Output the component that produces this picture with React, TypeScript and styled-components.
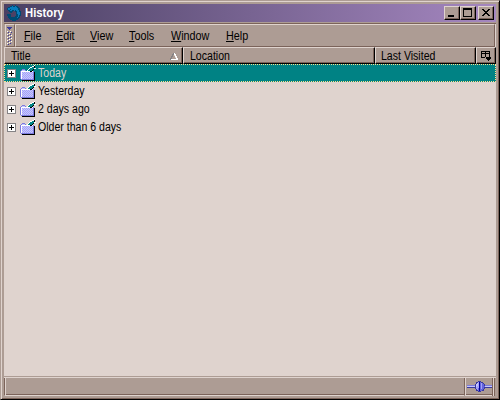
import React from 'react';
import styled, { createGlobalStyle } from 'styled-components';

const base = '#ad9c94';
const light = '#dfd3ce';
const dark = '#7b635a';

const Global = createGlobalStyle`
  *{box-sizing:border-box}
  html,body{margin:0;padding:0;overflow:hidden}
  body{font:12px/14px "Liberation Sans",Arial,sans-serif;color:#000;cursor:default}
`;

const Frame = styled.div`
  width:500px;height:400px;background:${base};
  border-style:solid;border-width:1px;border-color:${base} #000 #000 ${base};
  box-shadow:inset 1px 1px ${light},inset -1px -1px ${dark};
  padding:3px;display:flex;flex-direction:column;
`;
const TitleBar = styled.header`
  height:18px;flex:none;display:flex;align-items:center;padding:0 2px;
  background:linear-gradient(90deg,#4a4063,#a587c0);
`;
const WindowTitle = styled.h1`
  margin:0 auto 0 3px;color:#fff;font-size:12px;line-height:18px;font-weight:700;
  transform:scaleX(.94);transform-origin:0 0;
`;
const WinButton = styled.button<{ $gap?: boolean }>`
  width:16px;height:14px;padding:0;margin-left:${p => (p.$gap ? 2 : 0)}px;
  background:${base};border:1px solid;border-color:${light} #000 #000 ${light};
  box-shadow:inset -1px -1px ${dark};display:flex;
`;
const MenuBar = styled.nav`
  height:24px;flex:none;margin-top:1px;display:flex;padding-left:1px;
  border-top:1px solid ${dark};
`;
const Grip = styled.div`
  width:10px;border:1px solid;border-color:${light} ${dark} ${dark} ${light};padding:2px 0 0 1px;
`;
const MenuItems = styled.div`
  flex:1;display:flex;border:1px solid;border-color:${light} ${dark} ${dark} ${light};
  margin-right:1px;box-shadow:1px 0 ${light};
`;
const MenuItem = styled.div<{ $w: number }>`
  width:${p => p.$w}px;flex:none;line-height:22px;white-space:nowrap;
  &:first-child{margin-left:8px}
`;
const Label = styled.span<{ $scale?: number }>`
  display:inline-block;white-space:nowrap;transform:scaleX(${p => p.$scale ?? 0.88});transform-origin:0 50%;
  u{text-underline-offset:1px;text-decoration-thickness:1px;text-decoration-skip-ink:none}
`;
const Columns = styled.div`
  display:flex;height:17px;flex:none;
`;
const Column = styled.div<{ $w: number; $pad?: number }>`
  width:${p => p.$w}px;flex:none;display:flex;align-items:center;justify-content:space-between;
  padding:1px 4px 0 ${p => p.$pad ?? 6}px;border:1px solid;border-color:${light} #000 #000 ${light};
  box-shadow:inset -1px -1px ${dark};
`;
const Tree = styled.main`
  height:312px;flex:none;background:${light};
`;
const Row = styled.div<{ $selected?: boolean }>`
  height:18px;display:flex;align-items:center;padding-left:2px;
  color:${p => (p.$selected ? light : '#000')};
  border:1px ${p => (p.$selected ? 'dotted #ffe08c' : 'solid transparent')};
  background:${p => (p.$selected ? '#008284' : 'transparent')};
`;
const Expander = styled.span`
  width:9px;height:9px;flex:none;margin:1px 4px 0 0;display:flex;
`;
const EntryLabel = styled(Label)`
  margin-left:2px;
`;
const StatusBar = styled.footer`
  height:19px;flex:none;display:flex;margin-top:1px;padding-right:1px;border-top:1px solid ${light};
`;
const StatusPane = styled.div<{ $w: number }>`
  width:${p => p.$w}px;border-left:1px solid ${dark};border-bottom:1px solid ${light};
  box-shadow:inset 1px 0 ${light},inset 0 -1px ${dark};display:flex;padding:3px 0 0 2px;
`;
const StatusEdge = styled.div`
  width:3px;border:solid;border-width:0 1px;border-color:${dark};background:${light};
`;
const Svg = styled.svg`display:block;flex:none;`;

const palette: Record<string, string> = {
  k: '#000', w: '#fff', l: light, d: dark, g: '#848284',
  b: '#087dbd', n: '#004a73', t: '#008284', s: '#005a5a',
  v: '#a5a2f7', p: '#c6c7ff', m: '#39399c', y: '#6363de', o: '#0000a0', e: '#7b7bde',
};

function Pixels({ rows }: { rows: string[] }) {
  const w = Math.max(...rows.map(r => r.length));
  return (
    <Svg width={w} height={rows.length} shapeRendering="crispEdges" aria-hidden="true">
      {rows.flatMap((r, y) => [...r].map((c, x) =>
        palette[c] ? <rect key={`${x}-${y}`} x={x} y={y} width={1} height={1} fill={palette[c]} /> : null))}
    </Svg>
  );
}

const lizard = [
  '......n..n......',
  '....nnbnnbnn....',
  '..nnbbbbbbbnn...',
  '.nbbbbbbbbbbnn..',
  '.nbbnbbbbbbbnn..',
  '..nnbbnnbnbbbn..',
  '...nnnn..nnbbnn.',
  '....nn....nbbbn.',
  '..........nbbbn.',
  '.nnnn.....nnbbn.',
  '.nnnn.....nnbnn.',
  '..nnn....nnnbn..',
  '..nnnnnnnnnbnn..',
  '...nnnnnnnnnn...',
  '....nnnnnnnn....',
  '......nnnn......',
];
const folder = [
  '..............w.',
  '............wwk.',
  '..........wwttk.',
  '.........wttttww',
  '..eee...wttttk..',
  '.epppe.wttttk...',
  'ewwwwwwwwwkkwe..',
  'ewvpvpvpvpvpvek.',
  'ewpvpvpvpvpvpek.',
  'ewvpvpvpvpvpvek.',
  'ewpvpvpvpvpvpek.',
  'ewvpvpvpvpvpvek.',
  'ewpvpvpvpvpvpek.',
  'ewvpvpvpvpvpvek.',
  '.eeeeeeeeeeeeek.',
  '..kkkkkkkkkkkkk.',
];
const plus = [
  'ggggggggg', 'gwwwwwwwg', 'gwwwkwwwg', 'gwwwkwwwg', 'gwkkkkkwg',
  'gwwwkwwwg', 'gwwwkwwwg', 'gwwwwwwwg', 'ggggggggg',
];
const gripDots = [
  'mmmmm', '.mmm.', '..m..',
  '.....', 'w..w.', '.m..m', '..w..', 'w..m.', '.m..w', '..w..',
  'w..m.', '.m..w', '..w..', 'w..m.', '.m..w', '..w..', 'w..m.', '.m...',
];
const sortArrow = [
  '...gw...', '..ggww..', '..g.lw..', '.gg..ww.', '.g...lw.', 'gg....ww', 'gwwwwwww',
];
const picker = [
  'kkkkkkkkk.', 'k...k...k.', 'kkkkkkkkk.', 'k...k...k.', 'k...k...k.',
  'k...k...k.', 'kkkk.kkkkk', '.....kkkkk', '......kkk.', '.......k..',
];
const plug = [
  '...........mmm...........',
  '.........mmvoymm.........',
  '.........mpvoyvym........',
  '........mppvoyvyym.......',
  'eeeeeeeemppvoyvyymeeeeeee',
  'ppppppppmpvvoyvyyyppppppp',
  'mmmmmmmmmvvvoyvyymmmmmmmm',
  '........mvvyoyvyym.......',
  '.........mvyoyyym........',
  '.........mmyoyymm........',
  '...........mmm...........',
];
const minimize = ['', '', '', '', '', '', '', '', '...kkkkkk', '...kkkkkk'];
const maximize = [
  '', '..kkkkkkkkk', '..kkkkkkkkk', '..k.......k', '..k.......k',
  '..k.......k', '..k.......k', '..k.......k', '..k.......k', '..kkkkkkkkk',
];
const close = [
  '', '', '...kk....kk', '....kk..kk', '.....kkkk', '......kk', '.....kkkk', '....kk..kk', '...kk....kk',
];

const menus: [string, number][] = [['File', 32], ['Edit', 34], ['View', 39], ['Tools', 42], ['Window', 55], ['Help', 40]];
const entries = ['Today', 'Yesterday', '2 days ago', 'Older than 6 days'];

export default function App() {
  return (
    <>
      <Global />
      <Frame>
        <TitleBar>
          <Pixels rows={lizard} />
          <WindowTitle>History</WindowTitle>
          <WinButton aria-label="Minimize"><Pixels rows={minimize} /></WinButton>
          <WinButton aria-label="Maximize"><Pixels rows={maximize} /></WinButton>
          <WinButton $gap aria-label="Close"><Pixels rows={close} /></WinButton>
        </TitleBar>
        <MenuBar>
          <Grip><Pixels rows={gripDots} /></Grip>
          <MenuItems>
            {menus.map(([name, w]) => (
              <MenuItem key={name} $w={w}><Label $scale={0.9}><u>{name[0]}</u>{name.slice(1)}</Label></MenuItem>
            ))}
          </MenuItems>
        </MenuBar>
        <Columns>
          <Column $w={179}><Label>Title</Label><Pixels rows={sortArrow} /></Column>
          <Column $w={192}><Label>Location</Label></Column>
          <Column $w={101} $pad={5}><Label>Last Visited</Label></Column>
          <Column $w={20} $pad={4}><Pixels rows={picker} /></Column>
        </Columns>
        <Tree>
          {entries.map((name, i) => (
            <Row key={name} $selected={i === 0}>
              <Expander><Pixels rows={plus} /></Expander>
              <Pixels rows={folder} />
              <EntryLabel>{name}</EntryLabel>
            </Row>
          ))}
        </Tree>
        <StatusBar>
          <StatusPane $w={460} />
          <StatusPane $w={28}><Pixels rows={plug} /></StatusPane>
          <StatusEdge />
        </StatusBar>
      </Frame>
    </>
  );
}
